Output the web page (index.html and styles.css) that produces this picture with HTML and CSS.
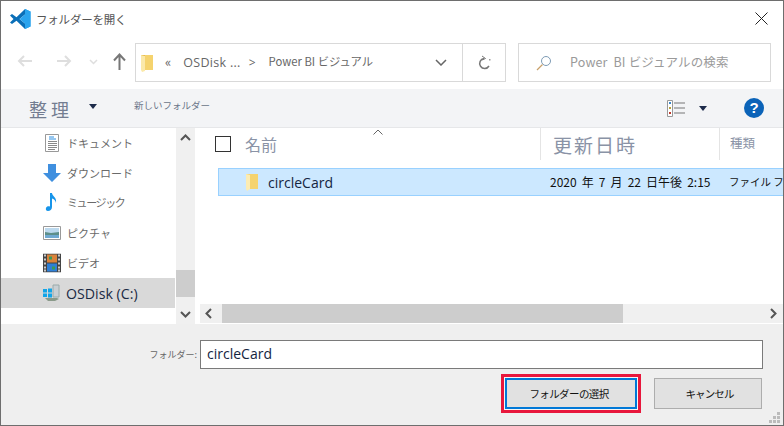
FILE: index.html
```html
<!DOCTYPE html>
<html lang="ja">
<head>
<meta charset="utf-8">
<title>フォルダーを開く</title>
<link rel="stylesheet" href="styles.css">
</head>
<body>
<div class="window">
  <header class="titlebar">
    <svg class="logo" width="21" height="20" viewBox="0 0 21 20"><path fill="#0a6fb8" d="M0 6.500 2 5l4.500 3.300L15 0v5.500L9.500 10 15 14.500V20L6.500 11.700 2 15l-2-1.500L3.500 10z"/><path fill="#1c9be8" d="M15 0l5.500 2.500v15L15 20z"/><path fill="#2aa4ee" d="M15 0l5.500 2.500v15L15 20V14.500L9.500 10 15 5.500z"/></svg>
    <span class="title">フォルダーを開く</span>
    <svg class="close" width="13" height="13" viewBox="0 0 13 13"><path d="M.5.500l12 12M12.500.500l-12 12" stroke="#222" fill="none"/></svg>
  </header>

  <div class="addressrow">
    <svg class="nav-arrow" width="16" height="14" viewBox="0 0 16 14"><path d="M15 7H2M7 2 2 7l5 5" stroke="#dedede" stroke-width="2" fill="none"/></svg>
    <svg class="nav-arrow" width="16" height="14" viewBox="0 0 16 14"><path d="M1 7h13M9 2l5 5-5 5" stroke="#dedede" stroke-width="2" fill="none"/></svg>
    <svg class="nav-mini" width="9" height="6" viewBox="0 0 9 6"><path d="M1 1l3.500 3.500L8 1" stroke="#dedede" stroke-width="1.500" fill="none"/></svg>
    <svg class="nav-up" width="13" height="17" viewBox="0 0 13 17"><path d="M6.500 17V2M1 7.500l5.500-6 5.500 6" stroke="#777" stroke-width="2" fill="none"/></svg>
    <div class="address">
      <svg class="crumbfolder" width="13" height="18" viewBox="0 0 13 18"><path fill="#f5d36e" d="M0 1h12v15H0z"/><path fill="#fbe9a9" d="M0 1l4 1v15l-3 1-1-2z"/><path fill="#e5b84b" d="M4 2 0 1h4z"/></svg>
      <span class="crumbs">«</span>
      <span class="crumb-disk">OSDisk ...</span>
      <span class="crumb-sep">&gt;</span>
      <span class="crumb-cur">Power BI ビジュアル</span>
      <svg class="addr-chev" width="12" height="7" viewBox="0 0 12 7"><path d="M1 1l5 5 5-5" stroke="#666" stroke-width="1.500" fill="none"/></svg>
      <div class="refresh">
        <svg width="13" height="15" viewBox="0 0 13 15"><path d="M6 3.500A5 5 0 1 0 11 11" stroke="#777" stroke-width="1.500" fill="none"/><path d="M4 1l3.500 2.500L4 5" stroke="#777" fill="none"/><path d="M11 4h1.500v1.500H11z" fill="#999"/></svg>
      </div>
    </div>
    <div class="search">
      <svg width="16" height="16" viewBox="0 0 16 16"><circle cx="10" cy="6" r="4.500" stroke="#7d9bb5" fill="none"/><path d="M6.500 9.500 1 15" stroke="#c9a06a" stroke-width="1.300"/></svg>
      <span class="search-text">Power&nbsp; BI ビジュアルの検索</span>
    </div>
  </div>

  <div class="toolbar">
    <span class="organize">整 理</span>
    <span class="caret"></span>
    <span class="newfolder">新しいフォルダー</span>
    <svg class="viewicon" width="18" height="17" viewBox="0 0 18 17"><path fill="#fff" stroke="#999" d="M.5.500h5v16h-5z"/><path fill="#3a86c8" d="M2 2h2v2H2z"/><path fill="#b9a23a" d="M2 7h2v2H2z"/><path fill="#c0392b" d="M2 12h2v2H2z"/><path stroke="#777" d="M7 3h11M7 8h11M7 13h11"/></svg>
    <span class="caret caret-view"></span>
    <span class="help">?</span>
  </div>

  <div class="main">
    <nav class="sidebar">
      <ul class="tree">
        <li class="tree-item">
          <svg class="tree-icon" width="16" height="18" viewBox="0 0 16 18"><path fill="#fff" stroke="#999" d="M1.500.500h13v17h-13z"/><path stroke="#2e8fe0" d="M5 3h5M5 5h7"/><path stroke="#888" d="M4 7.500h9M4 9.500h9M4 11.500h9M4 13.500h9M4 15.500h7"/></svg>
          <span>ドキュメント</span>
        </li>
        <li class="tree-item">
          <svg class="tree-icon" width="18" height="18" viewBox="0 0 18 18"><path fill="#3f8fdf" d="M5 0h8v9h5l-9 9-9-9h5z"/></svg>
          <span>ダウンロード</span>
        </li>
        <li class="tree-item tree-item-music">
          <svg class="tree-icon" width="14" height="18" viewBox="0 0 14 18"><path fill="#1795ea" d="M5 0h2c0 3 5 4 4 10-.5-2.500-2-4-4-4.500V14c0 2.500-2 4-4 4s-2.500-1.500-2-3 2-2 4-1.500z"/></svg>
          <span>ミュージック</span>
        </li>
        <li class="tree-item">
          <svg class="tree-icon" width="18" height="14" viewBox="0 0 18 14"><path fill="#fff" stroke="#999" d="M.5.500h17v13H.5z"/><path fill="#bcd9ee" d="M2 2h14v5H2z"/><path fill="#5d8f8a" d="M2 6l6 1 8-1v3H2z"/><path fill="#6fa9d1" d="M2 9h14v3H2z"/></svg>
          <span>ピクチャ</span>
        </li>
        <li class="tree-item">
          <svg class="tree-icon" width="18" height="19" viewBox="0 0 18 19"><path fill="#444" d="M0 0h18v19H0z"/><path fill="#ccc" d="M1 1h2v2H1zM1 5h2v2H1zM1 9h2v2H1zM1 13h2v2H1zM1 16h2v2H1zM15 1h2v2h-2zM15 5h2v2h-2zM15 9h2v2h-2zM15 13h2v2h-2zM15 16h2v2h-2z"/><path fill="#d9823a" d="M4 1h10v8H4z"/><path fill="#2e7fd6" d="M4 10h10v8H4z"/><path fill="#3a9a5a" d="M6 3h3v3H6zM9 13h3v3H9z"/></svg>
          <span>ビデオ</span>
        </li>
        <li class="tree-item tree-item-active">
          <svg class="tree-icon" width="20" height="18" viewBox="0 0 20 18"><path fill="#c9cfd3" stroke="#9aa" d="M11 1h6v12h-6z"/><path fill="#12a5e8" d="M1 5h4v3.500H1zM6 4.500h4v4H6zM1 9.500h4V13H1zM6 9.500h4v4H6z"/><path fill="#8a9a8a" d="M3 14l12 0 2 1-4 2H6z"/></svg>
          <span>OSDisk (C:)</span>
        </li>
      </ul>
      <div class="vscroll">
        <svg class="sb-arrow" width="11" height="7" viewBox="0 0 11 7"><path d="M1 6l4.500-4.500L10 6" stroke="#555" stroke-width="2" fill="none"/></svg>
        <div class="vtrack"><div class="vthumb"></div></div>
        <svg class="sb-arrow" width="11" height="7" viewBox="0 0 11 7"><path d="M1 1l4.500 4.500L10 1" stroke="#555" stroke-width="2" fill="none"/></svg>
      </div>
    </nav>
    <section class="files">
      <div class="fileview">
        <div class="colhead">
          <span class="check"></span>
          <span class="col col-name">名前</span>
          <svg class="sort" width="10" height="6" viewBox="0 0 10 6"><path d="M.5 5.500l4.500-4.500 4.500 4.500" stroke="#666" fill="none"/></svg>
          <span class="col col-date">更新日時</span>
          <span class="col col-type">種類</span>
        </div>
        <div class="filerow">
          <svg class="rowfolder" width="12" height="17" viewBox="0 0 12 17"><path fill="#f5d36e" d="M0 0h12v15H0z"/><path fill="#fcecb3" d="M0 0l4 1v14l-3 2-1-2z"/></svg>
          <span class="fname">circleCard</span>
          <span class="fdate">2020 年 7 月 22 日午後 2:15</span>
          <span class="ftype">ファイル フォルダー</span>
        </div>
      </div>
      <div class="hscroll">
        <svg class="sb-h" width="7" height="11" viewBox="0 0 7 11"><path d="M6 1 1.500 5.500 6 10" stroke="#555" stroke-width="2" fill="none"/></svg>
        <div class="htrack"><div class="hthumb"></div></div>
        <svg class="sb-h" width="7" height="11" viewBox="0 0 7 11"><path d="M1 1l4.500 4.500L1 10" stroke="#555" stroke-width="2" fill="none"/></svg>
      </div>
    </section>
  </div>

  <footer class="footer">
    <div class="namerow">
      <label class="namelabel">フォルダー:</label>
      <div class="nameinput">circleCard</div>
    </div>
    <div class="buttons">
      <div class="highlight"><button class="btn btn-primary">フォルダーの選択</button></div>
      <button class="btn btn-cancel">キャンセル</button>
    </div>
    <svg class="grip" width="11" height="11" viewBox="0 0 11 11"><path fill="#bbb" d="M8 0h3v3H8zM4 4h3v3H4zM8 4h3v3H8zM0 8h3v3H0zM4 8h3v3H4zM8 8h3v3H8z"/></svg>
  </footer>
</div>
</body>
</html>
```

FILE: styles.css
```css
* { box-sizing: border-box; }
html, body { margin: 0; padding: 0; }
body {
  width: 784px;
  height: 426px;
  overflow: hidden;
  font-family: "Noto Sans CJK JP", "Open Sans", sans-serif;
  background: #fff;
}
.window {
  width: 784px;
  height: 426px;
  border: 1px solid #6e6e6e;
  display: flex;
  flex-direction: column;
  background: #fff;
  position: relative;
  overflow: hidden;
}
.titlebar {
  height: 35px;
  display: flex;
  align-items: center;
  padding: 0 15px 0 9px;
  flex: none;
}
.logo { flex: none; }
.title { margin-left: 5px; font-size: 11.500px; letter-spacing: -.2px; color: #555; }
.close { margin-left: auto; }
.addressrow {
  height: 53px;
  flex: none;
  display: flex;
  align-items: flex-start;
  padding: 7px 12px 0 16px;
}
.nav-arrow { margin-top: 11px; margin-right: 23px; flex: none; }
.nav-mini { margin-top: 16px; margin-left: -6px; flex: none; }
.nav-up { margin-top: 10px; margin-left: 15px; flex: none; }
.address {
  margin-left: 9px;
  width: 371px;
  height: 39px;
  border: 1px solid #d9d9d9;
  display: flex;
  align-items: center;
  padding-left: 5px;
  flex: none;
  color: #666;
  font-size: 12px;
}
.crumbs { margin-left: 11px; font-size: 13px; margin-top: -2px; }
.crumb-disk { margin-left: 12px; font-family: "Open Sans", sans-serif; font-size: 12.500px; letter-spacing: .3px; margin-top: -1px; }
.crumb-sep { margin-left: 8px; font-family: "Open Sans", sans-serif; margin-top: -1px; }
.crumb-cur { margin-left: 13px; font-size: 11.300px; white-space: nowrap; margin-top: -3px; }
.addr-chev { margin-left: auto; margin-right: 15px; }
.refresh {
  width: 43px;
  height: 100%;
  border-left: 1px solid #d9d9d9;
  display: flex;
  align-items: center;
  justify-content: center;
  flex: none;
}
.search {
  margin-left: 12px;
  width: 253px;
  height: 39px;
  border: 1px solid #d9d9d9;
  display: flex;
  align-items: center;
  padding-left: 17px;
  flex: none;
}
.search-text { margin-left: 18px; font-size: 12.500px; letter-spacing: .15px; color: #9a9a9a; white-space: nowrap; margin-top: -2px; }
.toolbar {
  height: 39px;
  flex: none;
  background: #f3f4f6;
  border-bottom: 1px solid #e6e7e9;
  display: flex;
  align-items: center;
  padding: 0 19px 0 28px;
}
.organize { font-size: 18px; color: #737d91; white-space: nowrap; margin-top: 2px; }
.caret {
  width: 0;
  height: 0;
  border-left: 4px solid transparent;
  border-right: 4px solid transparent;
  border-top: 5px solid #1d2b4a;
  margin-left: 20px;
  margin-top: -4px;
}
.newfolder { margin-left: 37px; font-size: 9.500px; color: #6a7488; margin-top: -6px; white-space: nowrap; }
.viewicon { margin-left: auto; }
.caret-view { margin-left: 14px; margin-top: 0; }
.help {
  margin-left: 37px;
  width: 20px;
  height: 20px;
  border-radius: 50%;
  background: #0b63b8;
  color: #fff;
  font: bold 15px/20px "Liberation Sans", sans-serif;
  text-align: center;
}
.main { height: 196px; flex: none; display: flex; background: #fff; }
.sidebar { width: 199px; flex: none; display: flex; position: relative; }
.tree { list-style: none; margin: 0; padding: 0; width: 174px; flex: none; }
.tree-item {
  height: 30px;
  display: flex;
  align-items: center;
  position: relative;
  padding-left: 66px;
  font-size: 11px;
  color: #6a6a6a;
  white-space: nowrap;
}
.tree-item-music { height: 28px; margin-bottom: 2px; letter-spacing: -1.400px; }
.tree-icon { position: absolute; left: 51px; top: 50%; transform: translate(-50%, -50%); }
.tree-item-active {
  background: #d9d9d9;
  color: #1a2a44;
  font-family: "Open Sans", sans-serif;
  font-size: 14.200px;
  padding-left: 65px;
}
.vscroll {
  width: 19px;
  margin-left: 1px;
  background: #f0f0f0;
  display: flex;
  flex-direction: column;
  align-items: center;
}
.sb-arrow { flex: none; margin: 6px 0; }
.vtrack { flex: 1; width: 100%; position: relative; }
.vthumb { position: absolute; left: 0; right: 0; bottom: 8px; height: 27px; background: #cdcdcd; }
.files { flex: 1; display: flex; flex-direction: column; min-width: 0; }
.fileview { flex: 1; overflow: hidden; }
.colhead { height: 40px; position: relative; display: flex; align-items: center; }
.check { width: 16px; height: 16px; border: 1px solid #333; margin-left: 15px; margin-top: -8px; }
.col { color: #8a93a6; white-space: nowrap; }
.col-name { margin-left: 14px; font-size: 16px; margin-top: -9px; }
.sort { position: absolute; left: 173px; top: 1px; }
.col-date {
  position: absolute;
  left: 340px;
  top: 0;
  height: 32px;
  width: 180px;
  border-left: 1px solid #e4e4e4;
  border-right: 1px solid #e4e4e4;
  padding-left: 12px;
  font-size: 19px;
  letter-spacing: 2px;
  line-height: 33px;
}
.col-type { position: absolute; left: 530px; top: 5px; font-size: 12.500px; }
.filerow {
  margin-left: 18px;
  height: 28px;
  background: #cce8ff;
  border: 1px solid #99d1ff;
  border-right: 0;
  display: flex;
  align-items: center;
  position: relative;
  white-space: nowrap;
  overflow: hidden;
  padding-left: 27px;
}
.rowfolder { flex: none; }
.fname { margin-left: 10px; font-family: "Open Sans", sans-serif; font-size: 14px; color: #14253f; }
.fdate { position: absolute; left: 331px; top: 4px; font-size: 12px; word-spacing: 2.400px; color: #111; }
.ftype { position: absolute; left: 510px; top: 5px; font-size: 10.500px; color: #111; }
.hscroll {
  height: 19px;
  flex: none;
  background: #f0f0f0;
  display: flex;
  align-items: center;
  margin-bottom: 1px;
}
.sb-h { flex: none; margin: 0 6px; }
.hscroll .sb-h:first-child { margin: 0 7px 0 5px; }
.htrack { flex: 1; height: 100%; position: relative; }
.hthumb { position: absolute; left: 3px; top: 0; bottom: 0; width: 401px; background: #cdcdcd; }
.footer {
  flex: 1;
  background: #efefef;
  position: relative;
  padding: 16px 20px 0 0;
}
.namerow { display: flex; align-items: center; justify-content: flex-end; }
.namelabel { font-size: 9px; color: #666; margin-right: 3px; white-space: nowrap; }
.nameinput {
  width: 563px;
  height: 29px;
  background: #fff;
  border: 1px solid #7a7a7a;
  padding-left: 6px;
  font-family: "Open Sans", sans-serif;
  font-size: 14px;
  line-height: 26px;
  color: #14253f;
}
.buttons { display: flex; justify-content: flex-end; align-items: center; margin: 5px 1px 0 0; }
.highlight { border: 3px solid #e8173c; padding: 1px; background: #f5f5f5; margin-right: 13px; }
.btn {
  display: block;
  height: 31px;
  background: #e1e1e1;
  font-family: "Noto Sans CJK JP", sans-serif;
  font-size: 10.500px;
  letter-spacing: -.6px;
  color: #111;
  padding: 0;
}
.btn-primary { width: 132px; border: 2px solid #0078d7; padding-right: 4px; }
.btn-cancel { width: 108px; border: 1px solid #adadad; padding-left: 3px; letter-spacing: -.9px; }
.grip { position: absolute; right: 3px; bottom: 2px; }
```
